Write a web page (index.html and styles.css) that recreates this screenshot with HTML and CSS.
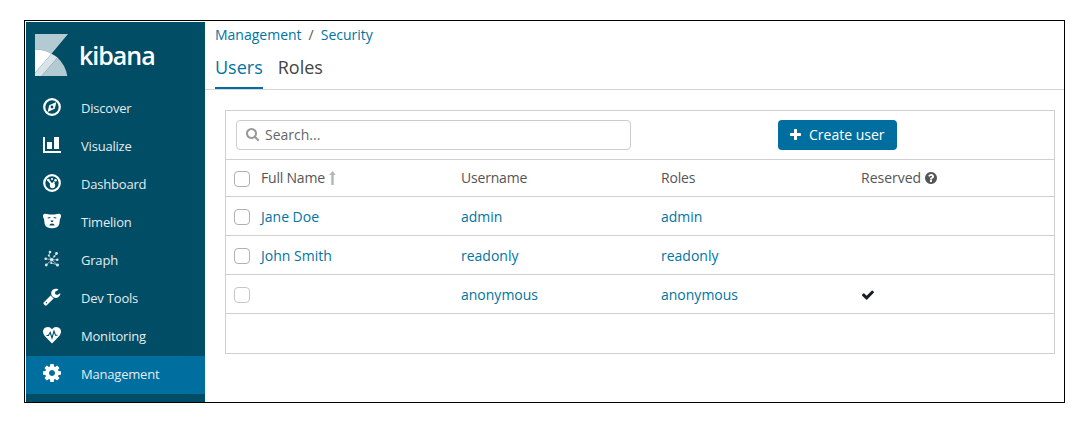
FILE: index.html
```html
<!DOCTYPE html>
<html lang="en">
<head>
<meta charset="utf-8">
<title>Kibana</title>
<link rel="stylesheet" href="styles.css">
</head>
<body>
<div class="frame">
  <nav class="sidebar">
    <div class="brand">
      <svg class="brand-mark" viewBox="0 0 33 42">
        <path d="M0 0H33L16.500 19.700A33 33 0 0 0 0 15.500Z" fill="#b3cad2"/>
        <path d="M22.500 23.600A33 33 0 0 1 32.300 42H6.500Z" fill="#b3cad2"/>
        <path d="M0 15.500A33 33 0 0 1 16.500 19.700L0 39Z" fill="#fff"/>
        <path d="M16.500 19.700A33 33 0 0 1 22.500 23.600L6.500 42H0V39Z" fill="#d9e4e8"/>
      </svg>
      <span class="brand-name">kibana</span>
    </div>
    <a class="nav-item"><svg class="nav-icon" viewBox="0 0 18 18"><circle cx="9" cy="9" r="7.800" fill="none" stroke="#fff" stroke-width="2.200"/><path fill="#fff" fill-rule="evenodd" d="M13.400 3.900L11.800 10.800L4.600 14.100L6.200 7.200ZM9 7.600A1.400 1.400 0 1 0 9 10.400A1.400 1.400 0 1 0 9 7.600Z"/></svg><span>Discover</span></a>
    <a class="nav-item"><svg class="nav-icon" viewBox="0 0 18 18"><path fill="#fff" d="M0 1H2V15H18V17H0ZM4 6H9V13H4ZM11 1H16V13H11Z"/></svg><span>Visualize</span></a>
    <a class="nav-item"><svg class="nav-icon" viewBox="0 0 18 18"><circle cx="9" cy="9" r="7.800" fill="none" stroke="#fff" stroke-width="2.200"/><path d="M5.300 6L9.500 11.500" stroke="#fff" stroke-width="2"/><g fill="#fff"><circle cx="9.500" cy="11.500" r="2.700"/><circle cx="9" cy="5" r="1.100"/><circle cx="12.500" cy="6.300" r="1.300"/><circle cx="10.800" cy="8.400" r="1"/><circle cx="5.300" cy="6" r="1.300"/></g></svg><span>Dashboard</span></a>
    <a class="nav-item"><svg class="nav-icon" viewBox="0 0 18 18"><path fill="#fff" d="M0 3Q1 1.200 4 2Q9 3 14 2Q17 1.200 18 3Q18.300 5.500 17 6.700L16.300 12Q15 16.300 9 16.300Q3 16.300 1.700 12L1 6.700Q-.3 5.500 0 3Z"/><path fill="#004d65" d="M4.600 5.600L7.400 5V5.900L4.800 6.600ZM13.400 5.600L10.600 5V5.900L13.200 6.600ZM7.300 8.600H10.700L9.700 9.900H8.300ZM6.300 13.600Q6.500 11.600 9 11.600T11.700 13.600Z"/></svg><span>Timelion</span></a>
    <a class="nav-item"><svg class="nav-icon" viewBox="0 0 18 18"><g fill="none" stroke="#a9c0c9" stroke-width=".9"><path d="M7 2L5.800 5.800L8.700 9.700L13.500 3.500M2.700 8.700L8.700 9.700L3.300 15M8.700 9.700L14.500 15M14.300 9.800L8.700 9.700M8 12.800L14.500 15"/></g><g fill="#dce7ea"><circle cx="7" cy="2" r="1.300"/><circle cx="13.500" cy="3.500" r="1.400"/><circle cx="2.700" cy="8.700" r="1.300"/><circle cx="5.800" cy="5.600" r="1"/><circle cx="8.700" cy="9.700" r="1.700"/><circle cx="14.300" cy="9.800" r="1.300"/><circle cx="3.300" cy="15" r="1.400"/><circle cx="8.200" cy="13" r="1.100"/><circle cx="14.500" cy="15" r="1.500"/><circle cx="11.400" cy="6.300" r="1"/></g></svg><span>Graph</span></a>
    <a class="nav-item"><svg class="nav-icon" viewBox="64 64 1700 1740"><path fill="#fff" d="M448 1472q0-26-19-45t-45-19-45 19-19 45 19 45 45 19 45-19 19-45zm644-420l-682 682q-37 37-90 37-52 0-91-37l-106-108q-38-36-38-90 0-53 38-91l681-681q39 98 114.500 173.500t173.500 114.500zm634-435q0 39-23 106-47 134-164.500 217.500t-258.500 83.500q-185 0-316.500-131.500t-131.500-316.500 131.500-316.500 316.500-131.500q58 0 121.500 16.500t107.500 46.500q16 11 16 28t-16 28l-293 169v224l193 107q5-3 79-48.500t135.500-81 70.500-35.500q15 0 23.500 10t8.500 25z"/></svg><span>Dev Tools</span></a>
    <a class="nav-item"><svg class="nav-icon" viewBox="0 0 18 18"><path fill="#fff" d="M9 17.500L1.500 9.700Q-.8 6.500 .4 3.800Q1.600 1 5 1Q7.200 1 9 3.200Q10.800 1 13 1Q16.400 1 17.600 3.800Q18.800 6.500 16.500 9.700Z"/><path d="M3.500 9.500H5.500L7.200 6.300L9 12L11 5L12.500 9.200H14.500" fill="none" stroke="#004d65" stroke-width="1.100"/></svg><span>Monitoring</span></a>
    <a class="nav-item active"><svg class="nav-icon" viewBox="128 128 1536 1536"><path fill="#fff" d="M1152 896q0-106-75-181t-181-75-181 75-75 181 75 181 181 75 181-75 75-181zm512-109v222q0 12-8 23t-20 13l-185 28q-19 54-39 91 35 50 107 138 10 12 10 25t-9 23q-27 37-99 108t-94 71q-12 0-26-9l-138-108q-44 23-91 38-16 136-29 186-7 28-36 28h-222q-14 0-24.500-8.500t-11.500-21.500l-28-184q-49-16-90-37l-141 107q-10 9-25 9-14 0-25-11-126-114-165-168-7-10-7-23 0-12 8-23 15-21 51-66.500t54-70.500q-27-50-41-99l-183-27q-13-2-21-12.500t-8-23.500v-222q0-12 8-23t19-13l186-28q14-46 39-92-40-57-107-138-10-12-10-24 0-10 9-23 26-36 98.500-107.500t94.500-71.500q13 0 26 10l138 107q44-23 91-38 16-136 29-186 7-28 36-28h222q14 0 24.500 8.500t11.500 21.500l28 184q49 16 90 37l142-107q9-9 24-9 13 0 25 10 129 119 165 170 7 8 7 22 0 12-8 23-15 21-51 66.500t-54 70.500q26 50 41 98l183 28q13 2 21 12.500t8 23.500z"/></svg><span>Management</span></a>
  </nav>
  <main class="content">
    <div class="breadcrumbs"><a>Management</a><span class="slash">/</span><a>Security</a></div>
    <div class="tabs"><a class="tab selected">Users</a><a class="tab">Roles</a></div>
    <section class="panel">
      <div class="toolbar">
        <div class="search">
          <svg class="search-icon" viewBox="64 128 1664 1664"><path fill="#999" d="M1216 832q0-185-131.500-316.500t-316.500-131.500-316.500 131.500-131.500 316.500 131.500 316.500 316.500 131.500 316.500-131.500 131.500-316.500zm512 832q0 52-38 90t-90 38q-54 0-90-38l-343-342q-179 124-399 124-143 0-273.500-55.500t-225-150-150-225-55.500-273.500 55.500-273.500 150-225 225-150 273.500-55.500 273.500 55.500 225 150 150 225 55.500 273.500q0 220-124 399l343 343q37 37 37 90z"/></svg>
          <span>Search...</span>
        </div>
        <a class="button"><svg class="plus" viewBox="192 128 1408 1408"><path fill="#fff" d="M1600 736v192q0 40-28 68t-68 28h-416v416q0 40-28 68t-68 28h-192q-40 0-68-28t-28-68v-416h-416q-40 0-68-28t-28-68v-192q0-40 28-68t68-28h416v-416q0-40 28-68t68-28h192q40 0 68 28t28 68v416h416q40 0 68 28t28 68z"/></svg><span>Create user</span></a>
      </div>
      <div class="row head">
        <i class="check"></i>
        <span>Full Name<svg class="sort" viewBox="0 0 7 14"><path fill="#b5b5b5" d="M3.500 0L6.800 4H4.700V14H2.300V4H.2Z"/></svg></span>
        <span>Username</span><span>Roles</span>
        <span class="reserved">Reserved<svg class="help" viewBox="128 128 1536 1536"><path fill="#555" d="M1024 1376v-192q0-14-9-23t-23-9h-192q-14 0-23 9t-9 23v192q0 14 9 23t23 9h192q14 0 23-9t9-23zm256-672q0-88-55.500-163t-138.500-116-170-41q-243 0-371 213-15 24 8 42l132 100q7 6 19 6 16 0 25-12 53-68 86-92 34-24 86-24 48 0 85.500 26t37.500 59q0 38-20 61t-68 45q-63 28-115.500 86.500t-52.500 125.500v36q0 14 9 23t23 9h192q14 0 23-9t9-23q0-19 21.500-49.500t54.500-49.500q32-18 49-28.500t46-35 44.500-48 28-60.500 12.500-81zm384 192q0 209-103 385.500t-279.500 279.500-385.500 103-385.500-103-279.500-279.500-103-385.500 103-385.500 279.500-279.500 385.500-103 385.500 103 279.500 279.500 103 385.500z"/></svg></span>
      </div>
      <div class="row"><i class="check"></i><a>Jane Doe</a><a>admin</a><a>admin</a><span></span></div>
      <div class="row"><i class="check"></i><a>John Smith</a><a>readonly</a><a>readonly</a><span></span></div>
      <div class="row"><i class="check muted"></i><span></span><a>anonymous</a><a>anonymous</a><span><svg class="tick" viewBox="121 300 1550 1222"><path fill="#191e23" d="M1671 566q0 40-28 68l-724 724-136 136q-28 28-68 28t-68-28l-136-136-362-362q-28-28-28-68t28-68l136-136q28-28 68-28t68 28l294 295 656-657q28-28 68-28t68 28l136 136q28 28 28 68z"/></svg></span></div>
      <div class="foot"></div>
    </section>
  </main>
</div>
</body>
</html>
```
FILE: styles.css
```css
* { box-sizing: border-box; }
body {
  margin: 0;
  padding: 20px 0 0 24px;
  background: #fff;
  font-family: "Open Sans", sans-serif;
  font-size: 14px;
  color: #555;
}
svg { display: block; flex: none; }
.frame {
  display: flex;
  width: 1041px;
  height: 383px;
  border: 1px solid #000;
  padding: 1px 0 0 1px;
}
.sidebar { width: 179px; background: #004d65; }
.brand { display: flex; height: 68px; padding: 12px 0 0 9px; }
.brand-mark { width: 33px; height: 42px; }
.brand-name {
  margin-left: 11px;
  font-size: 25px;
  font-weight: 600;
  line-height: 42px;
  letter-spacing: -1px;
  color: #fff;
}
.nav-item {
  display: flex;
  align-items: center;
  height: 38px;
  padding: 0 0 3px 17px;
  font-size: 13px;
  letter-spacing: -0.2px;
  color: #e4ecef;
}
.nav-item span { margin-left: 20px; }
.nav-item.active { background: #006e9e; }
.nav-icon { width: 18px; height: 18px; margin-bottom: 1px; }
.content { flex: 1; }
.breadcrumbs { display: flex; height: 26px; padding-left: 10px; line-height: 26px; }
.slash { margin: 0 7px; }
a { color: #0074a2; }
.tabs {
  display: flex;
  gap: 15px;
  height: 42px;
  padding-left: 10px;
  border-bottom: 1px solid #d4d4d4;
  font-size: 18px;
  line-height: 38px;
}
.tab { height: 41px; color: #444; }
.tab.selected { color: #0074a2; border-bottom: 2px solid #006e9e; }
.panel { width: 830px; margin: 20px 0 0 20px; border: 1px solid #d0d0d0; }
.toolbar { display: flex; height: 49px; padding: 9px 10px; border-bottom: 1px solid #d0d0d0; }
.search {
  display: flex;
  align-items: center;
  width: 395px;
  height: 30px;
  padding-left: 9px;
  border: 1px solid #ccc;
  border-radius: 4px;
  color: #666;
}
.search span, .button span { padding-bottom: 2px; }
.search-icon { width: 13px; height: 13px; margin: 0 6px 1px 0; }
.button {
  display: flex;
  align-items: center;
  width: 119px;
  height: 30px;
  margin-left: 147px;
  padding-left: 12px;
  border-radius: 4px;
  background: #006e9e;
  color: #fff;
}
.plus { width: 11px; height: 11px; margin: 0 8px 1px 0; }
.row {
  display: grid;
  grid-template-columns: 27px 200px 200px 200px 1fr;
  align-items: center;
  height: 39px;
  padding-left: 8px;
  border-bottom: 1px solid #d0d0d0;
}
.row.head { height: 37px; letter-spacing: -0.2px; }
.row.head span { padding-bottom: 2px; }
.row.head .reserved { letter-spacing: 0; }
.row span { display: flex; align-items: center; }
.check { width: 16px; height: 16px; margin-top: 2px; border: 1px solid #b0b0b0; border-radius: 4px; }
.check.muted { border-color: #c6c6c6; }
.sort { width: 7px; height: 14px; margin: 1px 0 0 4px; }
.help { width: 12px; height: 12px; margin: 1px 0 0 4px; }
.tick { width: 12px; height: 10px; margin: 2px 0 0 1px; }
.foot { height: 39px; }
```
